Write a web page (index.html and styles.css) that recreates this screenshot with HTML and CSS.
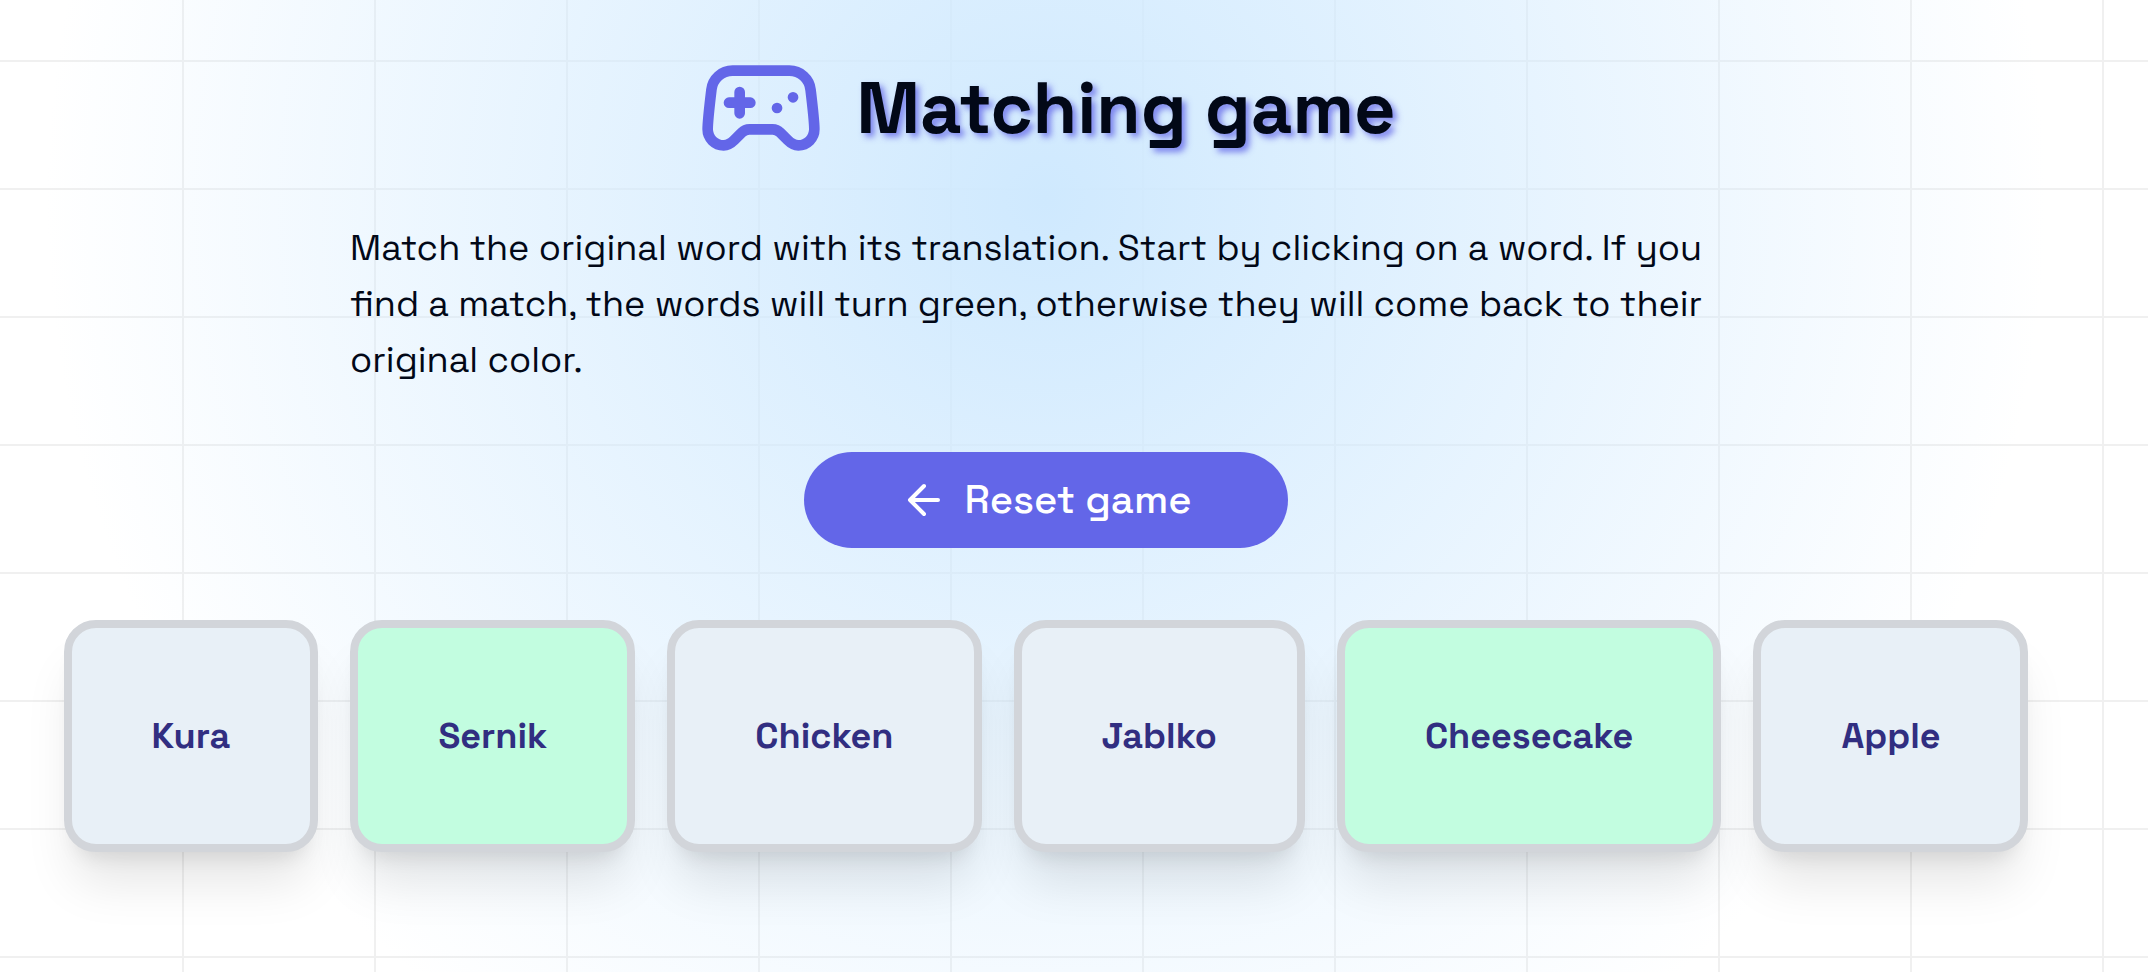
FILE: index.html
```html
<!DOCTYPE html>
<html lang="en">
<head>
<meta charset="utf-8">
<meta name="viewport" content="width=device-width, initial-scale=1">
<title>Matching game</title>
<link rel="stylesheet" href="styles.css">
</head>
<body>
<main class="game">
  <header class="game-header">
    <svg class="game-logo" viewBox="0 0 24 24" aria-hidden="true">
      <path d="M6 11h4M8 9v4M15 12h.01M18 10h.01"/>
      <path d="M17.32 5H6.68a4 4 0 0 0-3.978 3.59c-.006.052-.01.101-.017.152C2.604 9.416 2 14.456 2 16a3 3 0 0 0 3 3c1 0 1.5-.5 2-1l1.414-1.414A2 2 0 0 1 9.828 16h4.344a2 2 0 0 1 1.414.586L17 18c.5.5 1 1 2 1a3 3 0 0 0 3-3c0-1.545-.604-6.584-.685-7.258-.007-.05-.011-.1-.017-.151A4 4 0 0 0 17.32 5z"/>
    </svg>
    <h1 class="game-title">Matching game</h1>
  </header>
  <p class="game-intro">Match the original word with its translation. Start by clicking on a word. If you find a match, the words will turn green, otherwise they will come back to their original color.</p>
  <button class="reset" type="button">
    <svg class="reset-icon" viewBox="0 0 24 24" aria-hidden="true"><path d="m12 19-7-7 7-7M19 12H5"/></svg>
    Reset game
  </button>
  <div class="cards">
    <button class="card" type="button">Kura</button>
    <button class="card card-matched" type="button">Sernik</button>
    <button class="card" type="button">Chicken</button>
    <button class="card" type="button">Jablko</button>
    <button class="card card-matched" type="button">Cheesecake</button>
    <button class="card" type="button">Apple</button>
  </div>
</main>
</body>
</html>
```
FILE: styles.css
```css
* {
  box-sizing: border-box;
}

body {
  margin: 0;
  min-height: 100vh;
  color: #020817;
  font-family: "Space Grotesk", Inter, "Liberation Sans", sans-serif;
  font-size: 36px;
  line-height: 56px;
  background-color: #fff;
  background-image:
    radial-gradient(circle 1000px at 1046px 200px, #cfe9fe, transparent),
    linear-gradient(to right, #f0f0f0 2px, transparent 2px),
    linear-gradient(to bottom, #f0f0f0 2px, transparent 2px);
  background-size: auto, 192px 128px, 192px 128px;
  background-position: 0 0, -10px 60px, -10px 60px;
  background-repeat: no-repeat, repeat, repeat;
}

.game {
  display: flex;
  flex-direction: column;
  align-items: center;
  padding: 44px 88px 120px 32px;
}

.game-header {
  display: flex;
  align-items: center;
  gap: 32px;
}

.game-logo {
  width: 128px;
  height: 128px;
  stroke: #6366e8;
}

.game-logo,
.reset-icon {
  fill: none;
  stroke-width: 2;
  stroke-linecap: round;
  stroke-linejoin: round;
}

.game-title {
  margin: 0;
  font-size: 72px;
  line-height: 72px;
  font-weight: 700;
  text-shadow: 4px 4px 6px rgb(99 102 232 / 0.8);
}

.game-intro {
  max-width: 1392px;
  margin: 48px 0 64px;
}

.reset {
  display: flex;
  align-items: center;
  gap: 16px;
  margin: 0 0 72px;
  padding: 20px 96px;
  border: 0;
  border-radius: 48px;
  background: #6366e8;
  color: #fff;
  font: 500 40px/56px "Space Grotesk", Inter, "Liberation Sans", sans-serif;
  cursor: pointer;
}

.reset-icon {
  width: 48px;
  height: 48px;
  stroke: currentColor;
}

.cards {
  display: flex;
  flex-wrap: wrap;
  justify-content: center;
  gap: 32px;
}

.card {
  padding: 80px;
  border: 8px solid #d2d5da;
  border-radius: 32px;
  background: #e8f0f7;
  box-shadow: 0 40px 50px -10px rgb(0 0 0 / 0.1), 0 16px 20px -12px rgb(0 0 0 / 0.1);
  color: #312e81;
  font: 700 36px/56px "Space Grotesk", Inter, "Liberation Sans", sans-serif;
  cursor: pointer;
}

.card-matched {
  background: #c2fde0;
}
```
